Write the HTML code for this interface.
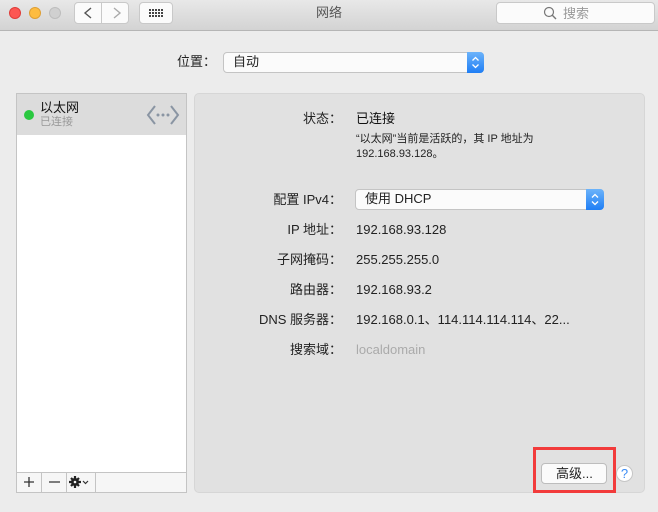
<!DOCTYPE html>
<html><head><meta charset="utf-8"><style>
*{margin:0;padding:0;box-sizing:border-box}
body{width:658px;height:512px;background:#ececec;font-family:"Liberation Sans","Noto Sans CJK SC",sans-serif;font-size:13px;line-height:18px;color:#222;position:relative;overflow:hidden}
.a{position:absolute}
.tb{left:0;top:0;width:658px;height:31px;background:linear-gradient(#e8e8e8,#d3d3d3);border-bottom:1px solid #b5b5b5}
.dot{width:12px;height:12px;border-radius:50%;top:7px}
.btn{background:#fbfbfb;border:1px solid #c9c9c9;border-radius:4px}
.lbl{right:316px;text-align:right;white-space:nowrap}
.val{left:356px;white-space:nowrap}
</style></head><body>
<div class="a tb"></div>
<div class="a dot" style="left:9px;background:#fc5753;border:1px solid #df3d39"></div>
<div class="a dot" style="left:29px;background:#fdbc40;border:1px solid #de9f34"></div>
<div class="a dot" style="left:49px;background:#d0d0d0;border:1px solid #bdbdbd"></div>
<div class="a btn" style="left:74px;top:2px;width:28px;height:22px;border-radius:4px 0 0 4px"></div>
<div class="a btn" style="left:101px;top:2px;width:28px;height:22px;border-radius:0 4px 4px 0"></div>
<svg class="a" style="left:74px;top:2px" width="56" height="22"><path d="M17 6 L11 11 L17 16" stroke="#555" stroke-width="1.4" fill="none"/><path d="M40 6 L46 11 L40 16" stroke="#aaa" stroke-width="1.4" fill="none"/></svg>
<div class="a btn" style="left:139px;top:2px;width:34px;height:22px"></div>
<svg class="a" style="left:139px;top:2px" width="34" height="22"><g fill="#444"><rect x="10" y="7" width="2" height="2"/><rect x="13" y="7" width="2" height="2"/><rect x="16" y="7" width="2" height="2"/><rect x="19" y="7" width="2" height="2"/><rect x="22" y="7" width="2" height="2"/><rect x="10" y="10" width="2" height="2"/><rect x="13" y="10" width="2" height="2"/><rect x="16" y="10" width="2" height="2"/><rect x="19" y="10" width="2" height="2"/><rect x="22" y="10" width="2" height="2"/><rect x="10" y="13" width="2" height="2"/><rect x="13" y="13" width="2" height="2"/><rect x="16" y="13" width="2" height="2"/><rect x="19" y="13" width="2" height="2"/><rect x="22" y="13" width="2" height="2"/></g></svg>
<div class="a" style="left:316px;top:4px;color:#555">网络</div>
<div class="a btn" style="left:496px;top:2px;width:159px;height:22px"></div>
<svg class="a" style="left:543px;top:6px" width="14" height="14"><circle cx="6" cy="6" r="4.5" stroke="#777" stroke-width="1.2" fill="none"/><path d="M9.3 9.3 L13 13" stroke="#777" stroke-width="1.4"/></svg>
<div class="a" style="left:563px;top:5px;color:#999">搜索</div>

<div class="a" style="left:177px;top:53px">位置：</div>
<div class="a btn" style="left:223px;top:52px;width:261px;height:21px;border-color:#c4c4c4"></div>
<div class="a" style="left:233px;top:53px">自动</div>
<div class="a" style="left:467px;top:52px;width:17px;height:21px;background:linear-gradient(#6cb3fa,#1f7ef5);border-radius:0 4px 4px 0"></div>
<svg class="a" style="left:467px;top:52px" width="17" height="21"><path d="M5.5 8.5 L8.5 5.5 L11.5 8.5 M5.5 12.5 L8.5 15.5 L11.5 12.5" stroke="#fff" stroke-width="1.3" fill="none"/></svg>

<div class="a" style="left:16px;top:93px;width:171px;height:400px;background:#fff;border:1px solid #c4c4c4"></div>
<div class="a" style="left:17px;top:94px;width:169px;height:41px;background:#dcdcdc"></div>
<div class="a" style="left:24px;top:110px;width:10px;height:10px;border-radius:50%;background:#2ac840"></div>
<div class="a" style="left:40px;top:99px;font-size:13px;color:#111">以太网</div>
<div class="a" style="left:40px;top:114px;font-size:11px;line-height:16px;color:#999">已连接</div>
<svg class="a" style="left:146px;top:103px" width="34" height="24"><path d="M9 3 L2 12 L9 21 M25 3 L32 12 L25 21" stroke="#8a95a3" stroke-width="2" fill="none"/><circle cx="12" cy="12" r="1.5" fill="#8a95a3"/><circle cx="17" cy="12" r="1.5" fill="#8a95a3"/><circle cx="22" cy="12" r="1.5" fill="#8a95a3"/></svg>
<div class="a" style="left:17px;top:472px;width:169px;height:20px;background:#f6f6f6;border-top:1px solid #c4c4c4"></div>
<div class="a" style="left:41px;top:472px;width:1px;height:20px;background:#c4c4c4"></div>
<div class="a" style="left:66px;top:472px;width:1px;height:20px;background:#c4c4c4"></div>
<div class="a" style="left:95px;top:472px;width:1px;height:20px;background:#c4c4c4"></div>
<svg class="a" style="left:17px;top:472px" width="80" height="20"><path d="M12 5 V15 M7 10 H17 M32 10 H43" stroke="#333" stroke-width="1.3"/><circle cx="58" cy="10" r="4" fill="#222"/><g stroke="#222" stroke-width="2.2"><path d="M58 4 V16 M52 10 H64 M54 6 L62 14 M62 6 L54 14"/></g><circle cx="58" cy="10" r="1.3" fill="#f6f6f6"/><path d="M66 9 L68.5 11.5 L71 9" stroke="#333" stroke-width="1.2" fill="none"/></svg>

<div class="a" style="left:194px;top:93px;width:451px;height:400px;background:#e1e1e1;border:1px solid #d6d6d6;border-radius:5px"></div>
<div class="a lbl" style="top:110px">状态：</div><div class="a val" style="top:110px;font-size:13px;color:#111">已连接</div>
<div class="a val" style="top:131px;font-size:11px;line-height:16px">“以太网”当前是活跃的，其 IP 地址为</div>
<div class="a val" style="top:146px;font-size:11px;line-height:16px">192.168.93.128。</div>
<div class="a lbl" style="top:191px">配置 IPv4：</div>
<div class="a btn" style="left:355px;top:189px;width:249px;height:21px;border-color:#c4c4c4"></div>
<div class="a val" style="left:365px;top:190px">使用 DHCP</div>
<div class="a" style="left:586px;top:189px;width:18px;height:21px;background:linear-gradient(#6cb3fa,#1f7ef5);border-radius:0 4px 4px 0"></div>
<svg class="a" style="left:586px;top:189px" width="18" height="21"><path d="M6 8.5 L9 5.5 L12 8.5 M6 12.5 L9 15.5 L12 12.5" stroke="#fff" stroke-width="1.3" fill="none"/></svg>
<div class="a lbl" style="top:221px">IP 地址：</div><div class="a val" style="top:221px">192.168.93.128</div>
<div class="a lbl" style="top:251px">子网掩码：</div><div class="a val" style="top:251px">255.255.255.0</div>
<div class="a lbl" style="top:281px">路由器：</div><div class="a val" style="top:281px">192.168.93.2</div>
<div class="a lbl" style="top:311px">DNS 服务器：</div><div class="a val" style="top:311px">192.168.0.1、114.114.114.114、22...</div>
<div class="a lbl" style="top:341px">搜索域：</div><div class="a val" style="top:341px;color:#aaa">localdomain</div>

<div class="a btn" style="left:541px;top:463px;width:66px;height:21px;border-color:#bdbdbd"></div>
<div class="a" style="left:556px;top:465px">高级...</div>
<div class="a" style="left:616px;top:465px;width:17px;height:17px;border-radius:50%;background:#fff;border:1px solid #c6c6c6;color:#3b8cf5;font-size:13px;text-align:center;line-height:15px">?</div>
<div class="a" style="left:533px;top:447px;width:83px;height:46px;border:3px solid #f23b3b"></div>
</body></html>
